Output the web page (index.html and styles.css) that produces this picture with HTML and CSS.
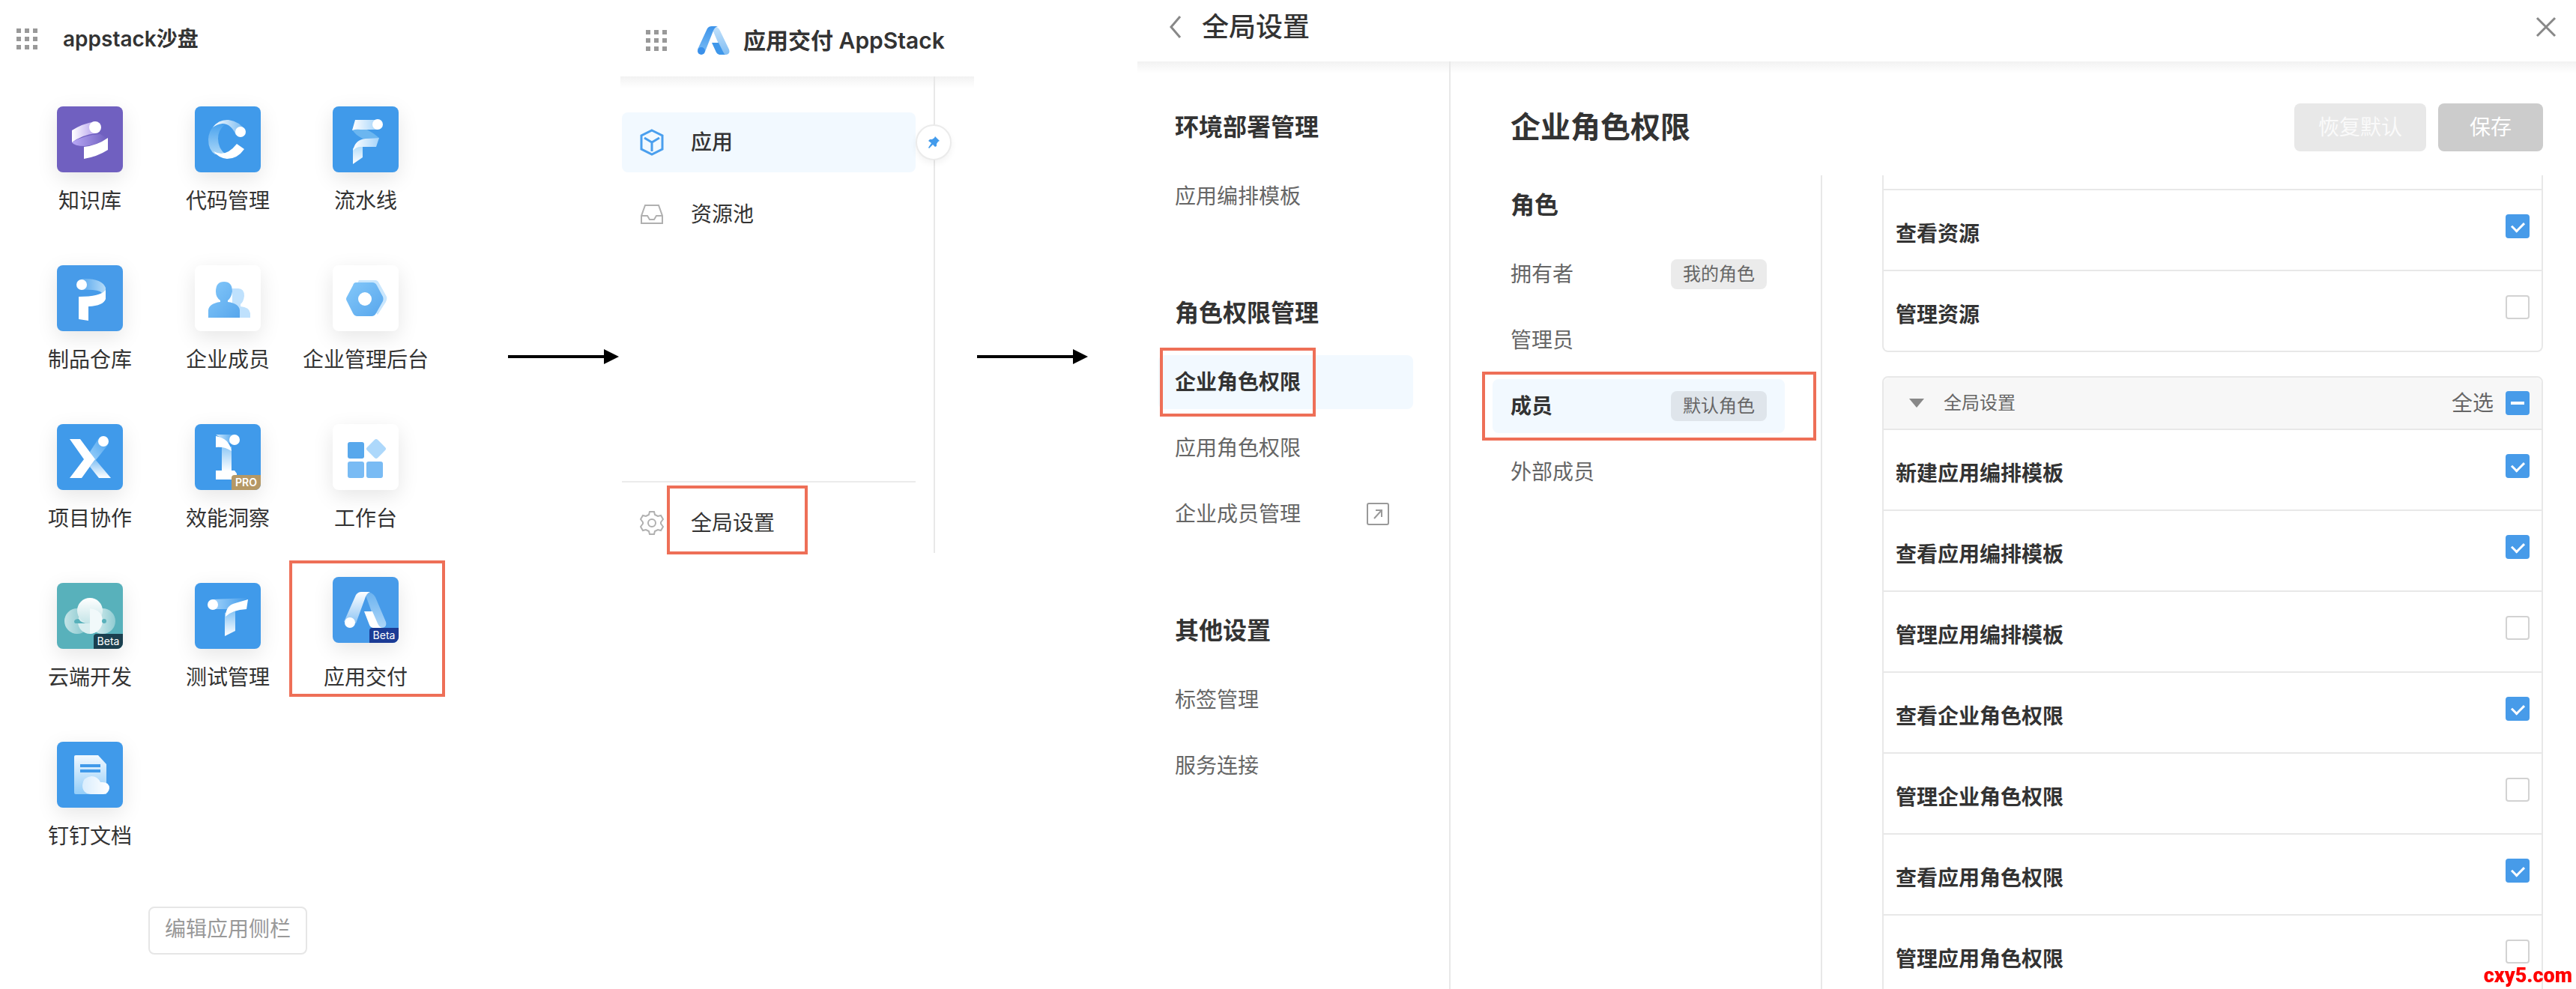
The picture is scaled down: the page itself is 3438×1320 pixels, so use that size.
FILE: index.html
```html
<!DOCTYPE html>
<html lang="zh-CN">
<head>
    <meta charset="UTF-8">
    <meta name="viewport" content="width=device-width, initial-scale=1.0">
    <title>应用交付 AppStack</title>
    <link rel="stylesheet" href="styles.css">
</head>
<body>
    <div class="page">
        <!-- 应用侧栏 -->
        <section class="launcher">
            <header class="launcher-header">
                <svg class="dots" viewBox="0 0 28 28"><path d="M0 0h6v6H0zM11 0h6v6h-6zM22 0h6v6h-6zM0 11h6v6H0zM11 11h6v6h-6zM22 11h6v6h-6zM0 22h6v6H0zM11 22h6v6h-6zM22 22h6v6h-6z"/></svg>
                <h1>appstack沙盘</h1>
            </header>
            <nav class="app-grid">
                <a class="app" href="#">
                    <span class="tile purple">
                        <svg viewBox="0 0 88 88">
                            <defs>
                                <linearGradient id="k1"><stop offset="0" stop-color="#fff"/><stop offset="1" stop-color="#b7a3ee"/></linearGradient>
                                <linearGradient id="k2"><stop offset="0" stop-color="#b8a8f5"/><stop offset="1" stop-color="#7060c0"/></linearGradient>
                            </defs>
                            <path d="M20 48Q36 38 58 37L67 43Q54 51 37 53Q23 53 20 48z" fill="url(#k2)"/>
                            <path d="M20 32Q34 23 51 20V36Q34 38 20 48z" fill="url(#k1)"/>
                            <circle cx="51" cy="28" r="8" fill="#fff"/>
                            <path d="M36 54Q54 52 68 42V58Q54 67 36 70z" fill="#fff"/>
                        </svg>
                    </span>
                    <span class="app-name">知识库</span>
                </a>
                <a class="app" href="#">
                    <span class="tile blue">
                        <svg viewBox="0 0 88 88">
                            <defs>
                                <linearGradient id="c1"><stop offset="0" stop-color="#fff"/><stop offset="1" stop-color="#6eb5f0"/></linearGradient>
                                <linearGradient id="c2" x1="0" y1="1" x2="0" y2="0"><stop offset="0" stop-color="#a9d6f8"/><stop offset="1" stop-color="#4aa3ee"/></linearGradient>
                            </defs>
                            <path d="M26 25Q18 34 18 44Q18 58 27 64L41 64Q31 56 31 43Q31 32 40 24z" fill="url(#c2)"/>
                            <path d="M24 28Q32 17 45 18Q60 20 68 33L55 38Q48 23 37 23Q29 24 24 28z" fill="url(#c1)"/>
                            <circle cx="61" cy="34" r="7" fill="#fff"/>
                            <path d="M25 60Q41 69 56 50L66 57Q57 70 43 70Q32 69 25 60z" fill="#fff"/>
                        </svg>
                    </span>
                    <span class="app-name">代码管理</span>
                </a>
                <a class="app" href="#">
                    <span class="tile blue">
                        <svg viewBox="0 0 88 88">
                            <defs>
                                <linearGradient id="f1"><stop offset="0" stop-color="#fff"/><stop offset="1" stop-color="#a5d4fa"/></linearGradient>
                                <linearGradient id="f2" x1="0" y1="0" x2="0" y2="1"><stop offset="0" stop-color="#a9d8f8"/><stop offset="1" stop-color="#fff"/></linearGradient>
                            </defs>
                            <path d="M26 31Q30 38 40 43L62 42Q54 35 44 30z" fill="#6bb6f0"/>
                            <path d="M30 18H60V31H38Q30 30 26 32z" fill="url(#f1)"/>
                            <circle cx="60" cy="24" r="7" fill="#fff"/>
                            <path d="M40 50V68L27 77V56z" fill="url(#f2)"/>
                            <path d="M62 42L58 54H38Q31 54 27 59Q30 44 44 43z" fill="url(#f1)"/>
                        </svg>
                    </span>
                    <span class="app-name">流水线</span>
                </a>
                <a class="app" href="#">
                    <span class="tile sky">
                        <svg viewBox="0 0 88 88">
                            <defs>
                                <linearGradient id="p1"><stop offset="0" stop-color="#5aa9ee"/><stop offset="1" stop-color="#b5dbf8"/></linearGradient>
                            </defs>
                            <path d="M33 18Q60 17 65 30V36L60 37Q56 32 33 33z" fill="url(#p1)"/>
                            <circle cx="33" cy="26" r="7" fill="#fff"/>
                            <path d="M29 42Q58 42 65 33V45Q62 54 42 55V74L29 72z" fill="#fff"/>
                        </svg>
                    </span>
                    <span class="app-name">制品仓库</span>
                </a>
                <a class="app" href="#">
                    <span class="tile">
                        <svg viewBox="0 0 88 88">
                            <defs>
                                <linearGradient id="m1" x1="0" y1="0" x2="1" y2="1"><stop offset="0" stop-color="#84c8fa"/><stop offset="1" stop-color="#57a6ec"/></linearGradient>
                            </defs>
                            <path d="M58 31Q66 31 66 41Q65 49 61 52V55Q73 56 74 64V70H56V56L50 52V31z" fill="#bfe1fd"/>
                            <path d="M39 22Q50 22 50 35Q49 43 44 47V49Q59 51 60 60V70H18V60Q19 51 34 49V47Q28 43 28 35Q28 22 39 22z" fill="url(#m1)"/>
                        </svg>
                    </span>
                    <span class="app-name">企业成员</span>
                </a>
                <a class="app" href="#">
                    <span class="tile">
                        <svg viewBox="0 0 88 88">
                            <defs>
                                <linearGradient id="h1" x1="0" y1="0" x2="1" y2="1"><stop offset="0" stop-color="#84c8fa"/><stop offset="1" stop-color="#57a6ec"/></linearGradient>
                            </defs>
                            <path d="M35 20H57Q60 20 62 24L72 42Q73 45 71 49L60 66L30 30z" fill="#c9e6fd"/>
                            <path d="M31 23H53Q57 23 59 27L67 42Q68 45 67 48L58 64Q56 68 52 68H33Q29 68 27 64L19 48Q17 45 19 42L27 27Q28 23 31 23z" fill="url(#h1)"/>
                            <circle cx="43" cy="45" r="9" fill="#fff"/>
                        </svg>
                    </span>
                    <span class="app-name">企业管理后台</span>
                </a>
                <a class="app" href="#">
                    <span class="tile blue">
                        <svg viewBox="0 0 88 88">
                            <defs>
                                <linearGradient id="x1" x1="1" y1="0" x2="0" y2="1"><stop offset="0" stop-color="#4ba3ee"/><stop offset="1" stop-color="#9bd0fa"/></linearGradient>
                                <linearGradient id="x2" x1="0" y1="0" x2="0" y2="1"><stop offset="0" stop-color="#81c0f4"/><stop offset="1" stop-color="#fff"/></linearGradient>
                            </defs>
                            <path d="M55 20L68 28L51 49L44 37z" fill="url(#x1)"/>
                            <path d="M51 47L72 72H56L44 57z" fill="url(#x2)"/>
                            <circle cx="62" cy="23" r="7" fill="#fff"/>
                            <path d="M17 20H31L51 47L33 72H17L36 47z" fill="#fff"/>
                        </svg>
                    </span>
                    <span class="app-name">项目协作</span>
                </a>
                <a class="app" href="#">
                    <span class="tile blue">
                        <svg viewBox="0 0 88 88">
                            <defs>
                                <linearGradient id="i1"><stop offset="0" stop-color="#d3ebfd"/><stop offset="1" stop-color="#4ba3ee"/></linearGradient>
                                <linearGradient id="i2" x1="0" y1="0" x2="0" y2="1"><stop offset="0" stop-color="#8ec8f6"/><stop offset="1" stop-color="#fff"/></linearGradient>
                            </defs>
                            <path d="M28 14H53V28L45 25z" fill="url(#i1)"/>
                            <path d="M36 30H49V63H36z" fill="url(#i2)"/>
                            <path d="M28 16Q46 19 49 36Q40 30 28 31z" fill="#fff"/>
                            <circle cx="53" cy="21" r="7" fill="#fff"/>
                            <path d="M28 62H53L56 66V74H28z" fill="#fff"/>
                        </svg>
                        <span class="tag pro">PRO</span>
                    </span>
                    <span class="app-name">效能洞察</span>
                </a>
                <a class="app" href="#">
                    <span class="tile">
                        <svg viewBox="0 0 88 88">
                            <rect x="20" y="24" width="22" height="22" rx="3" fill="#58a8ec"/>
                            <rect x="20" y="50" width="22" height="22" rx="3" fill="#79bbf4"/>
                            <rect x="45" y="50" width="22" height="22" rx="3" fill="#79bbf4"/>
                            <rect x="48" y="23" width="20" height="20" rx="3" fill="#add8fb" transform="rotate(45 58 33)"/>
                        </svg>
                    </span>
                    <span class="app-name">工作台</span>
                </a>
                <a class="app" href="#">
                    <span class="tile teal">
                        <svg viewBox="0 0 88 88">
                            <defs>
                                <linearGradient id="y1"><stop offset="0" stop-color="#c4e4e7"/><stop offset="1" stop-color="#7cc2c9"/></linearGradient>
                                <linearGradient id="y2"><stop offset="0" stop-color="#e5f4f5"/><stop offset="1" stop-color="#90ccd2"/></linearGradient>
                                <linearGradient id="y3" x1="0" y1="0" x2="0" y2="1"><stop offset="0" stop-color="#fff"/><stop offset="1" stop-color="#c4e4e7"/></linearGradient>
                            </defs>
                            <circle cx="27" cy="51" r="17" fill="url(#y1)"/>
                            <circle cx="61" cy="51" r="17" fill="url(#y2)"/>
                            <circle cx="44" cy="52" r="16" fill="#d9eef0"/>
                            <circle cx="44" cy="37" r="17" fill="url(#y3)"/>
                            <path d="M44 34Q61 36 61 52Q59 66 44 68z" fill="#f1f9fa"/>
                            <path d="M23 51Q24 48 29 48Q32 54 43 54H25Q23 54 23 51z" fill="#58b1bb"/>
                            <circle cx="63" cy="51" r="3" fill="#58b1bb"/>
                        </svg>
                        <span class="tag beta-dark">Beta</span>
                    </span>
                    <span class="app-name">云端开发</span>
                </a>
                <a class="app" href="#">
                    <span class="tile blue">
                        <svg viewBox="0 0 88 88">
                            <defs>
                                <linearGradient id="t1"><stop offset="0" stop-color="#9fd1fa"/><stop offset="1" stop-color="#409aea"/></linearGradient>
                                <linearGradient id="t2" x1="0" y1="0" x2="0" y2="1"><stop offset="0" stop-color="#7fc0f4"/><stop offset="1" stop-color="#fff"/></linearGradient>
                            </defs>
                            <path d="M24 22L71 20L50 35H24z" fill="url(#t1)"/>
                            <path d="M40 40L54 36V64L40 71z" fill="url(#t2)"/>
                            <circle cx="24" cy="29" r="7" fill="#fff"/>
                            <path d="M71 22L69 35Q50 36 41 45Q41 30 54 27z" fill="#fff"/>
                        </svg>
                    </span>
                    <span class="app-name">测试管理</span>
                </a>
                <a class="app current" href="#">
                    <span class="tile sky">
                        <svg viewBox="0 0 88 88">
                            <defs>
                                <linearGradient id="a1" x1="0" y1="0" x2="0" y2="1"><stop offset="0" stop-color="#fff"/><stop offset="1" stop-color="#8cc4f5"/></linearGradient>
                                <linearGradient id="a2" x1="0" y1="0" x2="0" y2="1"><stop offset="0" stop-color="#6bb2ef"/><stop offset="1" stop-color="#add6f8"/></linearGradient>
                            </defs>
                            <path d="M42 20Q53 19 57 27L71 60Q73 68 64 68Q58 66 56 58L46 30z" fill="url(#a2)"/>
                            <path d="M15 60L31 24Q34 20 38 20H50Q45 22 43 29L31 62z" fill="url(#a1)"/>
                            <circle cx="23" cy="61" r="7" fill="#fff"/>
                            <path d="M42 46H53L60 62Q62 67 66 68H54Q50 67 49 64z" fill="#fff"/>
                        </svg>
                        <span class="tag beta-blue">Beta</span>
                    </span>
                    <span class="app-name">应用交付</span>
                </a>
                <a class="app" href="#">
                    <span class="tile blue">
                        <svg viewBox="0 0 88 88">
                            <defs>
                                <linearGradient id="d1" x1="0" y1="0" x2="0" y2="1"><stop offset="0" stop-color="#f2f9ff"/><stop offset="1" stop-color="#93cdf8"/></linearGradient>
                                <linearGradient id="d2"><stop offset="0" stop-color="#d9edfd"/><stop offset="1" stop-color="#fff"/></linearGradient>
                            </defs>
                            <path d="M25 18H55L66 30V70H25Q23 70 23 68V20Q23 18 25 18z" fill="url(#d1)"/>
                            <path d="M31 30H58V34H31zM31 37H58V41H31z" fill="#409aea"/>
                            <path d="M46 46Q54 46 58 54Q70 53 70 62Q69 69 62 70H45Q34 69 34 58Q35 47 46 46z" fill="url(#d2)"/>
                        </svg>
                    </span>
                    <span class="app-name">钉钉文档</span>
                </a>
            </nav>
            <button class="edit-button" type="button">编辑应用侧栏</button>
        </section>

        <svg class="arrow" viewBox="0 0 148 20"><path d="M0 8h128V0l20 10-20 10v-8H0z"/></svg>

        <!-- AppStack 导航 -->
        <section class="product">
            <header class="product-header">
                <svg class="dots" viewBox="0 0 28 28"><path d="M0 0h6v6H0zM11 0h6v6h-6zM22 0h6v6h-6zM0 11h6v6H0zM11 11h6v6h-6zM22 11h6v6h-6zM0 22h6v6H0zM11 22h6v6h-6zM22 22h6v6h-6z"/></svg>
                <svg class="logo" viewBox="0 0 44 38">
                    <defs>
                        <linearGradient id="l1" x1="0" y1="0" x2="0" y2="1"><stop offset="0" stop-color="#3c93ea"/><stop offset="1" stop-color="#77baf4"/></linearGradient>
                        <linearGradient id="l2" x1="0" y1="0" x2="0" y2="1"><stop offset="0" stop-color="#c4e2fb"/><stop offset="1" stop-color="#80bdf3"/></linearGradient>
                    </defs>
                    <path d="M20 0Q29 0 31 6L43 31Q45 37 39 38Q35 37 33 33L22 7z" fill="url(#l2)"/>
                    <path d="M1 31L14 3Q16 0 20 0H28Q24 1 22 6L11 34z" fill="url(#l1)"/>
                    <circle cx="6" cy="33" r="5" fill="#3a90ea"/>
                    <path d="M20 22H29L35 34Q36 37 39 38H30Q27 37 26 35z" fill="#3f97ea"/>
                </svg>
                <h2>应用交付 AppStack</h2>
            </header>
            <div class="product-body">
                <nav class="product-nav">
                    <a class="product-link active" href="#">
                        <svg viewBox="0 0 32 36"><path d="M16 2L30 9V27L16 34L2 27V9zM6 12L16 18L26 12M16 18V30"/></svg>
                        <span>应用</span>
                    </a>
                    <a class="product-link" href="#">
                        <svg viewBox="0 0 32 36"><path d="M2 20L7 6H25L30 20V30H2zM2 20H10L13 25H19L22 20H30"/></svg>
                        <span>资源池</span>
                    </a>
                    <div class="product-footer">
                        <a class="product-link" href="#">
                            <svg viewBox="0 0 32 36"><path d="M13 3H19L20 7L24 9L28 8L31 13L28 17V19L31 23L28 28L24 27L20 29L19 33H13L12 29L8 27L4 28L1 23L4 19V17L1 13L4 8L8 9L12 7z"/><circle cx="16" cy="18" r="5"/></svg>
                            <span class="marked">全局设置</span>
                        </a>
                    </div>
                    <button class="pin" type="button" aria-label="固定">
                        <svg viewBox="0 0 18 18"><path d="M11 1L17 7L15 8L13 11L13 14L11 15L8 12L3 17L2 16L6 10L2 7L4 5H7L10 3z"/></svg>
                    </button>
                </nav>
            </div>
        </section>

        <svg class="arrow" viewBox="0 0 148 20"><path d="M0 8h128V0l20 10-20 10v-8H0z"/></svg>

        <!-- 全局设置 -->
        <section class="settings">
            <header class="settings-header">
                <button class="icon-button" type="button" aria-label="返回">
                    <svg width="18" height="32" viewBox="0 0 18 32"><path d="M15 2L3 16L15 30"/></svg>
                </button>
                <h2>全局设置</h2>
                <button class="icon-button close" type="button" aria-label="关闭">
                    <svg width="28" height="28" viewBox="0 0 28 28"><path d="M2 2L26 26M26 2L2 26"/></svg>
                </button>
            </header>
            <div class="settings-body">
                <nav class="settings-nav">
                    <div class="nav-section">
                        <h3>环境部署管理</h3>
                        <a href="#"><span>应用编排模板</span></a>
                    </div>
                    <div class="nav-section">
                        <h3>角色权限管理</h3>
                        <a class="active" href="#"><span>企业角色权限</span></a>
                        <a href="#"><span>应用角色权限</span></a>
                        <a href="#">
                            <span>企业成员管理</span>
                            <svg class="external" viewBox="0 0 30 30"><path d="M3 1H27Q29 1 29 3V27Q29 29 27 29H3Q1 29 1 27V3Q1 1 3 1zM10 21L20 10M12 10H20V19"/></svg>
                        </a>
                    </div>
                    <div class="nav-section">
                        <h3>其他设置</h3>
                        <a href="#"><span>标签管理</span></a>
                        <a href="#"><span>服务连接</span></a>
                    </div>
                </nav>
                <main class="content">
                    <div class="content-head">
                        <h1>企业角色权限</h1>
                        <button class="reset" type="button" disabled>恢复默认</button>
                        <button class="save" type="button" disabled>保存</button>
                    </div>
                    <div class="content-body">
                        <div class="roles">
                            <h3>角色</h3>
                            <a href="#">拥有者 <span class="badge">我的角色</span></a>
                            <a href="#">管理员</a>
                            <a class="active" href="#">成员 <span class="badge">默认角色</span></a>
                            <a href="#">外部成员</a>
                        </div>
                        <div class="permissions">
                            <div class="group scrolled">
                                <div class="row"><label for="view-resource">查看资源</label><input type="checkbox" id="view-resource" checked></div>
                                <div class="row"><label for="manage-resource">管理资源</label><input type="checkbox" id="manage-resource"></div>
                            </div>
                            <div class="group">
                                <div class="group-head">
                                    <svg class="caret" viewBox="0 0 20 12"><path d="M0 0h20L10 12z"/></svg>
                                    <span class="group-name">全局设置</span>
                                    <label for="select-all">全选</label>
                                    <input type="checkbox" id="select-all">
                                </div>
                                <div class="row"><label for="create-template">新建应用编排模板</label><input type="checkbox" id="create-template" checked></div>
                                <div class="row"><label for="view-template">查看应用编排模板</label><input type="checkbox" id="view-template" checked></div>
                                <div class="row"><label for="manage-template">管理应用编排模板</label><input type="checkbox" id="manage-template"></div>
                                <div class="row"><label for="view-org-role">查看企业角色权限</label><input type="checkbox" id="view-org-role" checked></div>
                                <div class="row"><label for="manage-org-role">管理企业角色权限</label><input type="checkbox" id="manage-org-role"></div>
                                <div class="row"><label for="view-app-role">查看应用角色权限</label><input type="checkbox" id="view-app-role" checked></div>
                                <div class="row"><label for="manage-app-role">管理应用角色权限</label><input type="checkbox" id="manage-app-role"></div>
                            </div>
                        </div>
                    </div>
                </main>
            </div>
        </section>
    </div>
    <span class="watermark">cxy5.com</span>

    <script>
        // 部分选中状态
        document.getElementById("select-all").indeterminate = true;
    </script>
</body>
</html>
```

FILE: styles.css
```css
* {
    box-sizing: border-box;
}
body {
    margin: 0;
    background: #fff;
    color: #333;
    font-family: Inter, "Noto Sans CJK SC", sans-serif;
    font-size: 28px;
    line-height: 40px;
}
h1, h2, h3 {
    margin: 0;
    font-weight: 600;
}
a {
    color: inherit;
    text-decoration: none;
}
button {
    font: inherit;
    cursor: pointer;
}
svg {
    display: block;
    flex: none;
}
.page {
    display: flex;
    height: 100vh;
    overflow: hidden;
}
.dots {
    width: 28px;
    height: 28px;
    fill: #999;
}
.arrow {
    width: 148px;
    height: 20px;
    margin-top: 466px;
}

/* 应用侧栏 */
.launcher {
    flex: none;
    width: 678px;
    padding: 32px 98px 0 28px;
}
.launcher-header {
    display: flex;
    align-items: center;
    gap: 34px;
    margin-left: -6px;
}
.launcher-header h1 {
    font-size: 28px;
}
.app-grid {
    display: grid;
    grid-template-columns: repeat(3, 1fr);
    row-gap: 66px;
    margin-top: 70px;
}
.app {
    position: relative;
    display: flex;
    flex-direction: column;
    align-items: center;
    gap: 18px;
}
.tile {
    position: relative;
    width: 88px;
    height: 88px;
    border-radius: 8px;
    background: #fff;
    box-shadow: 0 8px 28px rgba(0, 0, 0, 0.1);
    overflow: hidden;
}
.tile.blue {
    background: #409aea;
}
.tile.sky {
    background: #479be9;
}
.tile.purple {
    background: #7060c0;
}
.tile.teal {
    background: #58b1bb;
}
.tag {
    position: absolute;
    right: 0;
    bottom: 0;
    width: 39px;
    height: 20px;
    border-top-left-radius: 4px;
    color: #fff;
    font-size: 14px;
    line-height: 20px;
    text-align: center;
}
.pro {
    background: #b59865;
    font-weight: 600;
}
.beta-dark {
    background: #1b3f4e;
}
.beta-blue {
    background: #1b3b95;
}
.app-name {
    white-space: nowrap;
}
.current .tile {
    transform: translateY(-8px);
}
.current::after {
    content: "";
    position: absolute;
    inset: -30px -14px -6px -10px;
    border: 4px solid #ee6f57;
}
.edit-button {
    display: block;
    width: 212px;
    height: 64px;
    margin: 74px auto 0;
    padding: 0 0 4px;
    border: 2px solid #e6e6e6;
    border-radius: 8px;
    background: #fff;
    color: #999;
}

/* AppStack 导航 */
.product {
    display: flex;
    flex: none;
    flex-direction: column;
    width: 472px;
    height: 738px;
    margin: 0 4px 0 2px;
}
.product-header {
    display: flex;
    align-items: center;
    height: 102px;
    padding: 6px 0 0 34px;
}
.product-header h2 {
    font-size: 30px;
    white-space: nowrap;
}
.logo {
    width: 44px;
    height: 38px;
    margin: 0 18px 0 40px;
}
.product-body {
    flex: 1;
    padding-right: 52px;
    background: linear-gradient(#f2f2f2, #fff) no-repeat top / 100% 16px;
}
.product-nav {
    position: relative;
    display: flex;
    flex-direction: column;
    gap: 16px;
    height: 100%;
    padding: 48px 24px 0 2px;
    border-right: 2px solid #e8e8e8;
}
.product-link {
    display: flex;
    align-items: center;
    gap: 36px;
    height: 80px;
    padding-left: 24px;
    border-radius: 8px;
}
.product-link svg {
    width: 32px;
    height: 36px;
    fill: none;
    stroke: #b0b0b0;
    stroke-width: 2;
}
.product-link.active {
    background: #f2f9ff;
    font-weight: 500;
}
.product-link.active svg {
    stroke: #4a9fee;
    stroke-width: 3;
}
.product-footer {
    margin-top: auto;
    padding-top: 14px;
    border-top: 2px solid #ebebeb;
}
.marked {
    position: relative;
}
.marked::after {
    content: "";
    position: absolute;
    inset: -30px -44px -22px -32px;
    border: 4px solid #ee6f57;
}
.pin {
    position: absolute;
    top: 64px;
    right: -24px;
    display: flex;
    align-items: center;
    justify-content: center;
    width: 48px;
    height: 48px;
    padding: 0;
    border: 2px solid #ebebeb;
    border-radius: 50%;
    background: #fff;
    box-shadow: 0 4px 8px rgba(0, 0, 0, 0.05);
}
.pin svg {
    width: 18px;
    height: 18px;
    fill: #429bec;
}

/* 全局设置 */
.settings {
    display: flex;
    flex: 1;
    flex-direction: column;
    min-width: 0;
    margin-left: 66px;
}
.settings-header {
    display: flex;
    flex: none;
    align-items: center;
    height: 82px;
    padding: 0 26px 10px 42px;
}
.settings-header h2 {
    margin-left: 26px;
    font-size: 36px;
    font-weight: 500;
}
.icon-button {
    padding: 0;
    border: none;
    background: none;
}
.icon-button svg {
    fill: none;
    stroke: #888;
    stroke-width: 3;
}
.close {
    margin-left: auto;
}
.settings-body {
    display: flex;
    flex: 1;
    min-height: 0;
    background: linear-gradient(#f2f2f2, #fff) no-repeat top / 100% 16px;
}
.settings-nav {
    display: flex;
    flex: none;
    flex-direction: column;
    gap: 96px;
    width: 418px;
    padding: 64px 48px 0 28px;
    border-right: 2px solid #e8e8e8;
}
.nav-section {
    display: flex;
    flex-direction: column;
    gap: 16px;
}
.nav-section h3, .roles h3 {
    margin-bottom: 16px;
    font-size: 32px;
    line-height: 48px;
}
.nav-section h3 {
    padding-left: 22px;
}
.nav-section a {
    display: flex;
    align-items: center;
    justify-content: space-between;
    padding: 0 32px 0 22px;
    border-radius: 8px;
    color: #666;
    line-height: 72px;
}
.nav-section .active, .roles .active {
    background: #f2f9ff;
    color: #333;
    font-weight: 600;
}
.nav-section .active span {
    position: relative;
}
.nav-section .active span::after {
    content: "";
    position: absolute;
    inset: -10px -20px;
    border: 4px solid #ee6f57;
}
.external {
    width: 30px;
    height: 30px;
    fill: none;
    stroke: #999;
    stroke-width: 2;
}
.content {
    display: flex;
    flex: 1;
    flex-direction: column;
    min-width: 0;
    padding: 56px 44px 0 80px;
}
.content-head {
    display: flex;
    align-items: center;
    gap: 16px;
    margin-bottom: 32px;
}
.content-head h1 {
    flex: 1;
    font-size: 40px;
}
.content-head button {
    height: 64px;
    padding: 0 32px;
    border: none;
    border-radius: 8px;
}
.reset {
    background: #e8e8e8;
    color: #fafafa;
}
.content-head .save {
    padding: 0 42px;
    background: #ccc;
    color: #fff;
}
.content-body {
    display: flex;
    flex: 1;
    min-height: 0;
}
.roles {
    display: flex;
    flex: none;
    flex-direction: column;
    gap: 16px;
    width: 440px;
    margin-left: -24px;
    padding: 16px 48px 0 0;
    border-right: 2px solid #e8e8e8;
}
.roles h3 {
    padding-left: 24px;
}
.roles a {
    position: relative;
    display: flex;
    align-items: center;
    justify-content: space-between;
    padding: 0 24px;
    border-radius: 8px;
    color: #666;
    line-height: 72px;
}
.roles .active::after {
    content: "";
    position: absolute;
    inset: -10px -42px -10px -14px;
    border: 4px solid #ee6f57;
}
.badge {
    padding: 0 16px;
    border-radius: 8px;
    background: rgba(0, 0, 0, 0.08);
    color: #666;
    font-size: 24px;
    font-weight: 400;
    line-height: 40px;
}
.permissions {
    flex: 1;
    margin-left: 80px;
    overflow: hidden;
}
.group {
    margin-bottom: 32px;
    border: 2px solid #e8e8e8;
    border-radius: 8px;
}
.group.scrolled {
    padding-top: 18px;
    border-top: none;
    border-top-left-radius: 0;
    border-top-right-radius: 0;
}
.group-head {
    display: flex;
    align-items: center;
    height: 68px;
    padding: 0 16px 0 34px;
    border-radius: 8px 8px 0 0;
    background: #f7f7f7;
    color: #666;
}
.caret {
    width: 20px;
    height: 12px;
    fill: #888;
}
.group-name {
    flex: 1;
    margin-left: 26px;
    font-size: 24px;
}
.row {
    display: flex;
    justify-content: space-between;
    height: 108px;
    padding: 32px 16px 0;
    border-top: 2px solid #e8e8e8;
    font-weight: 600;
    line-height: 52px;
}
input[type="checkbox"] {
    display: flex;
    flex: none;
    justify-content: center;
    width: 32px;
    height: 32px;
    margin: 0;
    border: 2px solid #d2d2d2;
    border-radius: 4px;
    background: #fff;
    appearance: none;
}
.group-head input[type="checkbox"] {
    margin-left: 16px;
}
input[type="checkbox"]:checked, input[type="checkbox"]:indeterminate {
    border-color: #479be9;
    background: #479be9;
}
input[type="checkbox"]:checked::after {
    content: "";
    width: 8px;
    height: 13px;
    margin-top: 5px;
    border: solid #fff;
    border-width: 0 3px 3px 0;
    transform: rotate(45deg);
}
input[type="checkbox"]:indeterminate::after {
    content: "";
    width: 18px;
    height: 4px;
    margin-top: 12px;
    background: #fff;
}
.watermark {
    position: fixed;
    right: 5px;
    bottom: 0;
    color: #f00;
    font-family: "Liberation Sans Narrow", Roboto, sans-serif;
    font-size: 27px;
    font-weight: 900;
    line-height: 36px;
}
```
